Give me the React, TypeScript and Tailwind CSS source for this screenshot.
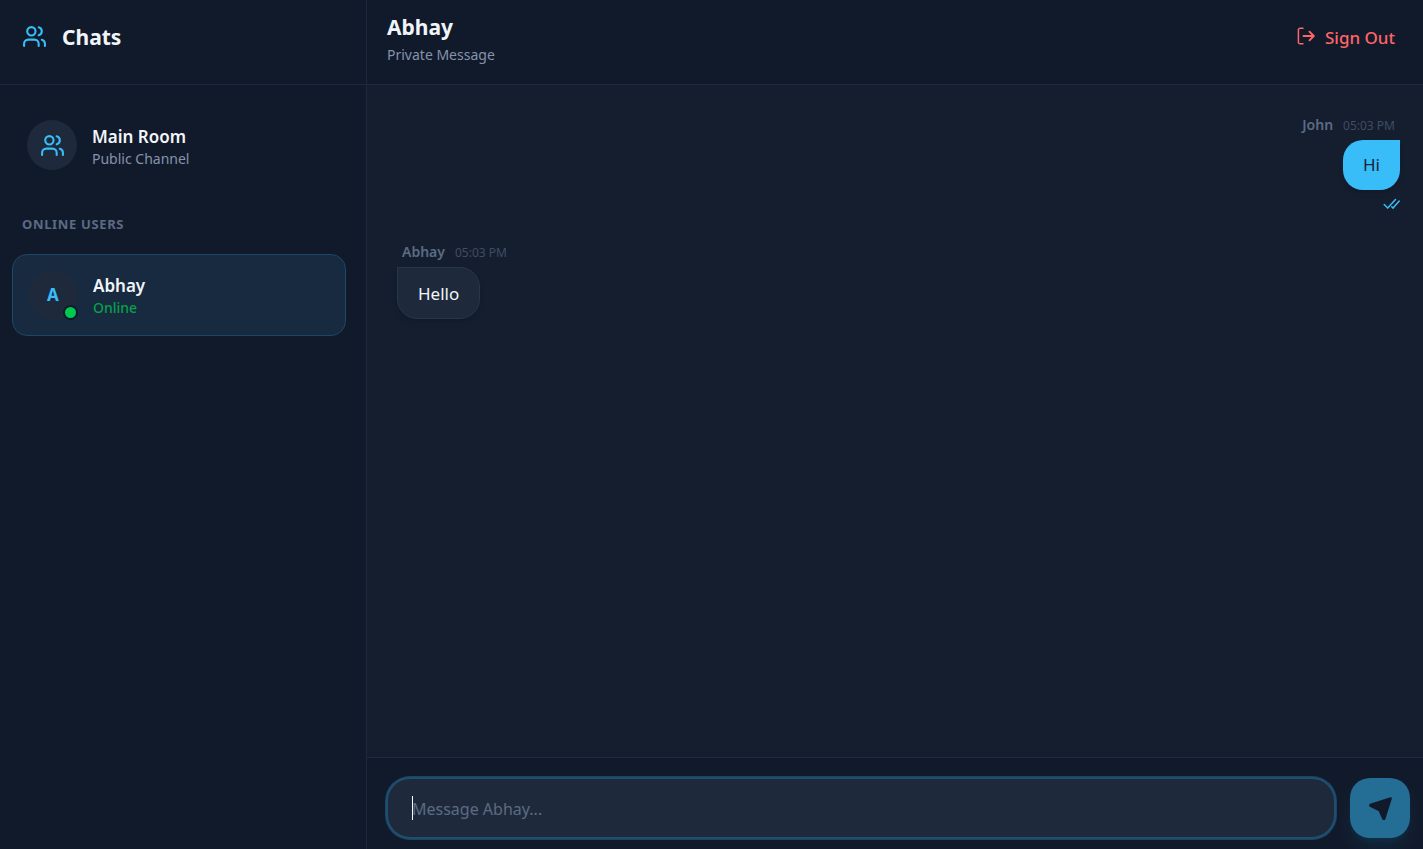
import { FormEvent, useState } from "react";
import { Users } from "lucide-react";

interface Message {
  id: number;
  sender: string;
  text: string;
  time: string;
  own: boolean;
}

const messages: Message[] = [
  { id: 1, sender: "John", text: "Hi", time: "05:03 PM", own: true },
  { id: 2, sender: "Abhay", text: "Hello", time: "05:03 PM", own: false },
];

function LogOutIcon() {
  return (
    <svg className="mb-1" width="18" height="18" viewBox="0 0 18 18" fill="none" stroke="currentColor" strokeLinecap="round" strokeLinejoin="round">
      <path d="M6 1.2H3a1.6 1.6 0 0 0-1.6 1.6v12.4A1.6 1.6 0 0 0 3 16.8h3" strokeWidth="1.5" />
      <path d="M6.5 9h10.2M12.5 4.7L16.8 9l-4.3 4.3" strokeWidth="1.9" />
    </svg>
  );
}

function ReadIcon() {
  return (
    <svg width="18" height="12" viewBox="0 0 18 12" fill="none" stroke="currentColor" strokeWidth="1.5" strokeLinecap="round" strokeLinejoin="round">
      <path d="M2.2 6.5l3.5 3.6L13.5 1.5M9.8 8.8l1.3 1.3L17.2 3" />
    </svg>
  );
}

function SendIcon() {
  return (
    <svg width="26" height="26" viewBox="0 0 24 24" fill="currentColor" stroke="currentColor" strokeWidth="2" strokeLinejoin="round">
      <polygon points="3 9 22 3 16 22 15 22 11.5 14 3 10" />
    </svg>
  );
}

function Bubble({ message }: { message: Message }) {
  return (
    <li className={message.own ? "flex flex-col items-end" : "flex flex-col items-start"}>
      <div className="flex items-center gap-[10px] px-[5px] mb-1">
        <span className="text-[14px] leading-[18px] pb-0.5 font-semibold text-[#5b6b84]">{message.sender}</span>
        <time className="text-[12px] leading-5 text-[#3f4d62]">{message.time}</time>
      </div>
      {message.own ? (
        <p className="px-5 py-3 text-[17px] leading-[26px] rounded-[20px] rounded-tr-none bg-[#38bdf8] text-[#16233a] shadow-md">
          {message.text}
        </p>
      ) : (
        <p className="px-5 pt-[13px] pb-[11px] text-[17px] leading-[26px] rounded-[20px] rounded-tl-none bg-[#1e2a3b] border border-[#25384a] text-[#f1f5f9] shadow-md">
          {message.text}
        </p>
      )}
      {message.own && (
        <span className="mt-2 text-[#38bdf8]" aria-label="Read">
          <ReadIcon />
        </span>
      )}
    </li>
  );
}

export default function App() {
  const [draft, setDraft] = useState("");

  const handleSend = (e: FormEvent) => {
    e.preventDefault();
    setDraft("");
  };

  return (
    <div className="flex h-screen bg-[#111a2b] font-['Noto_Sans',sans-serif] text-[#f1f5f9]">
      {/* Sidebar */}
      <aside className="flex flex-col w-[367px] shrink-0 border-r border-[#1b2a3c]">
        <header className="flex items-center gap-[15px] h-[85px] px-[22px] pb-3 border-b border-[#1b2a3c]">
          <Users size={25} className="text-[#38bdf8]" />
          <h1 className="pt-0.5 text-[21px] leading-8 font-bold">Chats</h1>
        </header>

        <nav className="flex flex-col pl-3 pr-5 pt-5">
          <button className="flex items-center gap-[15px] h-[80px] px-[15px] text-left rounded-[15px]">
            <span className="flex items-center justify-center size-[50px] rounded-full bg-[#1e2a3b] text-[#38bdf8]">
              <Users size={25} />
            </span>
            <span className="flex flex-col pt-1">
              <span className="text-[17px] leading-6 font-semibold">Main Room</span>
              <span className="text-[14px] leading-5 text-[#8593aa]">Public Channel</span>
            </span>
          </button>

          <h2 className="px-[10px] mt-7 mb-[19px] text-[13px] leading-[22px] font-bold tracking-wider text-[#5b6b84]">ONLINE USERS</h2>

          <button className="flex items-center gap-[15px] h-[82px] px-[15px] text-left rounded-[15px] border border-[#1d4766] bg-[#172a40]">
            <span className="relative flex items-center justify-center size-[50px] rounded-full bg-[#1e2a3b] text-[17px] font-bold text-[#38bdf8]">
              A
              <span className="absolute right-0 bottom-0 size-[15px] rounded-full border-2 border-[#111a2b] bg-[#00c950]" />
            </span>
            <span className="flex flex-col pt-0.5">
              <span className="text-[17px] leading-6 font-semibold">Abhay</span>
              <span className="text-[14px] leading-5 font-medium text-[#06a049]">Online</span>
            </span>
          </button>
        </nav>
      </aside>

      {/* Conversation */}
      <main className="flex flex-col flex-1 min-w-0">
        <header className="flex items-center justify-between h-[85px] pl-5 pr-7 pb-2 border-b border-[#1b2a3c]">
          <div>
            <h2 className="pt-0.5 text-[21px] leading-8 font-bold">Abhay</h2>
            <p className="text-[14px] leading-6 text-[#8593aa]">Private Message</p>
          </div>
          <button className="flex items-center gap-[10px] text-[17px] font-medium text-[#ff6467]">
            <LogOutIcon />
            Sign Out
          </button>
        </header>

        <ul className="flex flex-col flex-1 gap-[33px] pl-[30px] pr-[23px] pt-[31px] bg-[#151e2f]">
          {messages.map((message) => (
            <Bubble key={message.id} message={message} />
          ))}
        </ul>

        <form onSubmit={handleSend} className="flex items-center gap-[14px] h-[92px] pl-[19px] pr-[13px] pt-2 border-t border-[#1b2a3c]">
          <div className="relative flex flex-1 min-w-0 items-center">
            <input
              autoFocus
              aria-label="Message Abhay"
              value={draft}
              onChange={(e) => setDraft(e.target.value)}
              placeholder="Message Abhay..."
              className={
                "w-full h-[62px] px-6 pt-0.5 text-[16px] rounded-[24px] border-2 border-[#1f4f70] ring-1 ring-[#1c4460] bg-[#1e2a3b] outline-none placeholder:text-[#5b6b84] " +
                (draft ? "caret-white" : "caret-transparent")
              }
            />
            {/* Caret for the empty field */}
            {!draft && <span className="absolute left-[26px] w-px h-6 bg-white pointer-events-none" />}
          </div>
          <button aria-label="Send" className="flex items-center justify-center size-[60px] rounded-[20px] bg-[#246d94] text-[#111a2b] shadow-lg shadow-sky-400/10">
            <SendIcon />
          </button>
        </form>
      </main>
    </div>
  );
}
